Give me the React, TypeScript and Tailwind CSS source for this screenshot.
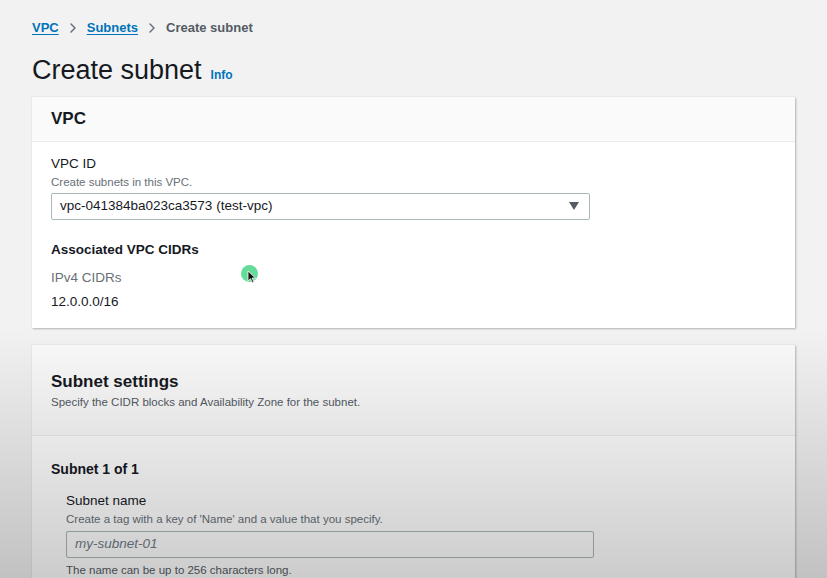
import { ChevronRight } from 'lucide-react';

const font = { fontFamily: '"Liberation Sans", Arial, sans-serif' };

function Caret() {
  return (
    <svg width="12" height="10" viewBox="0 0 12 10" aria-hidden>
      <path d="M1 1h10L6 9z" fill="#545b64" />
    </svg>
  );
}

export default function App() {
  return (
    <div className="relative h-[578px] w-[827px] overflow-hidden bg-[#f2f2f2] text-[#16191f]" style={font}>
      <div className="px-[32px] pt-[18px]">
        {/* breadcrumb */}
        <nav className="flex items-center gap-[6px] text-[13px] font-bold">
          <a className="text-[#0073bb] underline underline-offset-2">VPC</a>
          <ChevronRight className="h-[16px] w-[16px] text-[#687078]" strokeWidth={2.2} />
          <a className="text-[#0073bb] underline underline-offset-2">Subnets</a>
          <ChevronRight className="h-[16px] w-[16px] text-[#687078]" strokeWidth={2.2} />
          <span className="text-[#545b64]">Create subnet</span>
        </nav>

        <div className="mt-[14px] flex items-baseline gap-[9px]">
          <h1 className="text-[27px] font-normal leading-[36px] text-[#16191f]">Create subnet</h1>
          <span className="text-[12px] font-bold text-[#0073bb]">Info</span>
        </div>

        {/* VPC card */}
        <section className="mt-[9px] w-[763px] bg-white shadow-[1px_1px_2px_rgba(0,0,0,0.25),0_0_1px_rgba(0,0,0,0.15)]">
          <div className="h-[45px] border-b border-[#eaeded] bg-[#fafafa] px-[19px] pt-[11px]">
            <h2 className="text-[17px] font-bold leading-[22px]">VPC</h2>
          </div>
          <div className="px-[19px] pb-[17px] pt-[13px]">
            <div className="text-[13.5px] leading-[18px]">VPC ID</div>
            <div className="mt-[1px] text-[11.5px] leading-[16px] text-[#687078]">Create subnets in this VPC.</div>
            <div className="mt-[3px] flex h-[27px] w-[539px] items-center justify-between rounded-[2px] border border-[#aab7b8] pl-[8px] pr-[9px] text-[13.5px]">
              <span>vpc-041384ba023ca3573 (test-vpc)</span>
              <Caret />
            </div>
            <div className="mt-[21px] text-[13.5px] font-bold leading-[18px]">Associated VPC CIDRs</div>
            <div className="mt-[10px] text-[13.5px] leading-[18px] text-[#687078]">IPv4 CIDRs</div>
            <div className="mt-[6px] text-[13.5px] leading-[18px]">12.0.0.0/16</div>
          </div>
        </section>

        {/* Subnet settings card */}
        <section className="mt-[17px] w-[763px] bg-white shadow-[1px_1px_2px_rgba(0,0,0,0.25),0_0_1px_rgba(0,0,0,0.15)]">
          <div className="h-[91px] border-b border-[#eaeded] bg-[#fafafa] px-[19px] pt-[26px]">
            <h2 className="text-[17px] font-bold leading-[22px]">Subnet settings</h2>
            <p className="mt-[1px] text-[11.5px] leading-[16px] text-[#545b64]">Specify the CIDR blocks and Availability Zone for the subnet.</p>
          </div>
          <div className="px-[19px] pt-[24px]">
            <div className="text-[14px] font-bold leading-[18px]">Subnet 1 of 1</div>
            <div className="mt-[14px] pl-[15px]">
              <div className="text-[13.5px] leading-[18px]">Subnet name</div>
              <div className="mt-[1px] text-[11.5px] leading-[16px] text-[#687078]">Create a tag with a key of 'Name' and a value that you specify.</div>
              <div className="mt-[4px] flex h-[27px] w-[528px] items-center rounded-[2px] border border-[#aab7b8] px-[8px] text-[13.5px] italic text-[#6f7b86]">
                my-subnet-01
              </div>
              <div className="mt-[4px] text-[11.5px] leading-[16px] text-[#545b64]">The name can be up to 256 characters long.</div>
              <div className="h-[40px]" />
            </div>
          </div>
        </section>
      </div>

      {/* cursor highlight */}
      <div className="pointer-events-none absolute left-[241px] top-[265px] h-[17px] w-[17px] rounded-full bg-[#3ed27f] opacity-80" />
      <svg className="pointer-events-none absolute left-[247px] top-[270px]" width="10" height="14" viewBox="0 0 10 14" aria-hidden>
        <path d="M1 1v10l2.5-2.3 1.8 4 1.6-.7-1.8-3.9H8.5z" fill="#111" stroke="#fff" strokeWidth="0.8" />
      </svg>

      {/* video vignette toward bottom */}
      <div className="pointer-events-none absolute inset-x-0 bottom-0 h-[250px] bg-gradient-to-b from-transparent to-black/20" />
    </div>
  );
}
